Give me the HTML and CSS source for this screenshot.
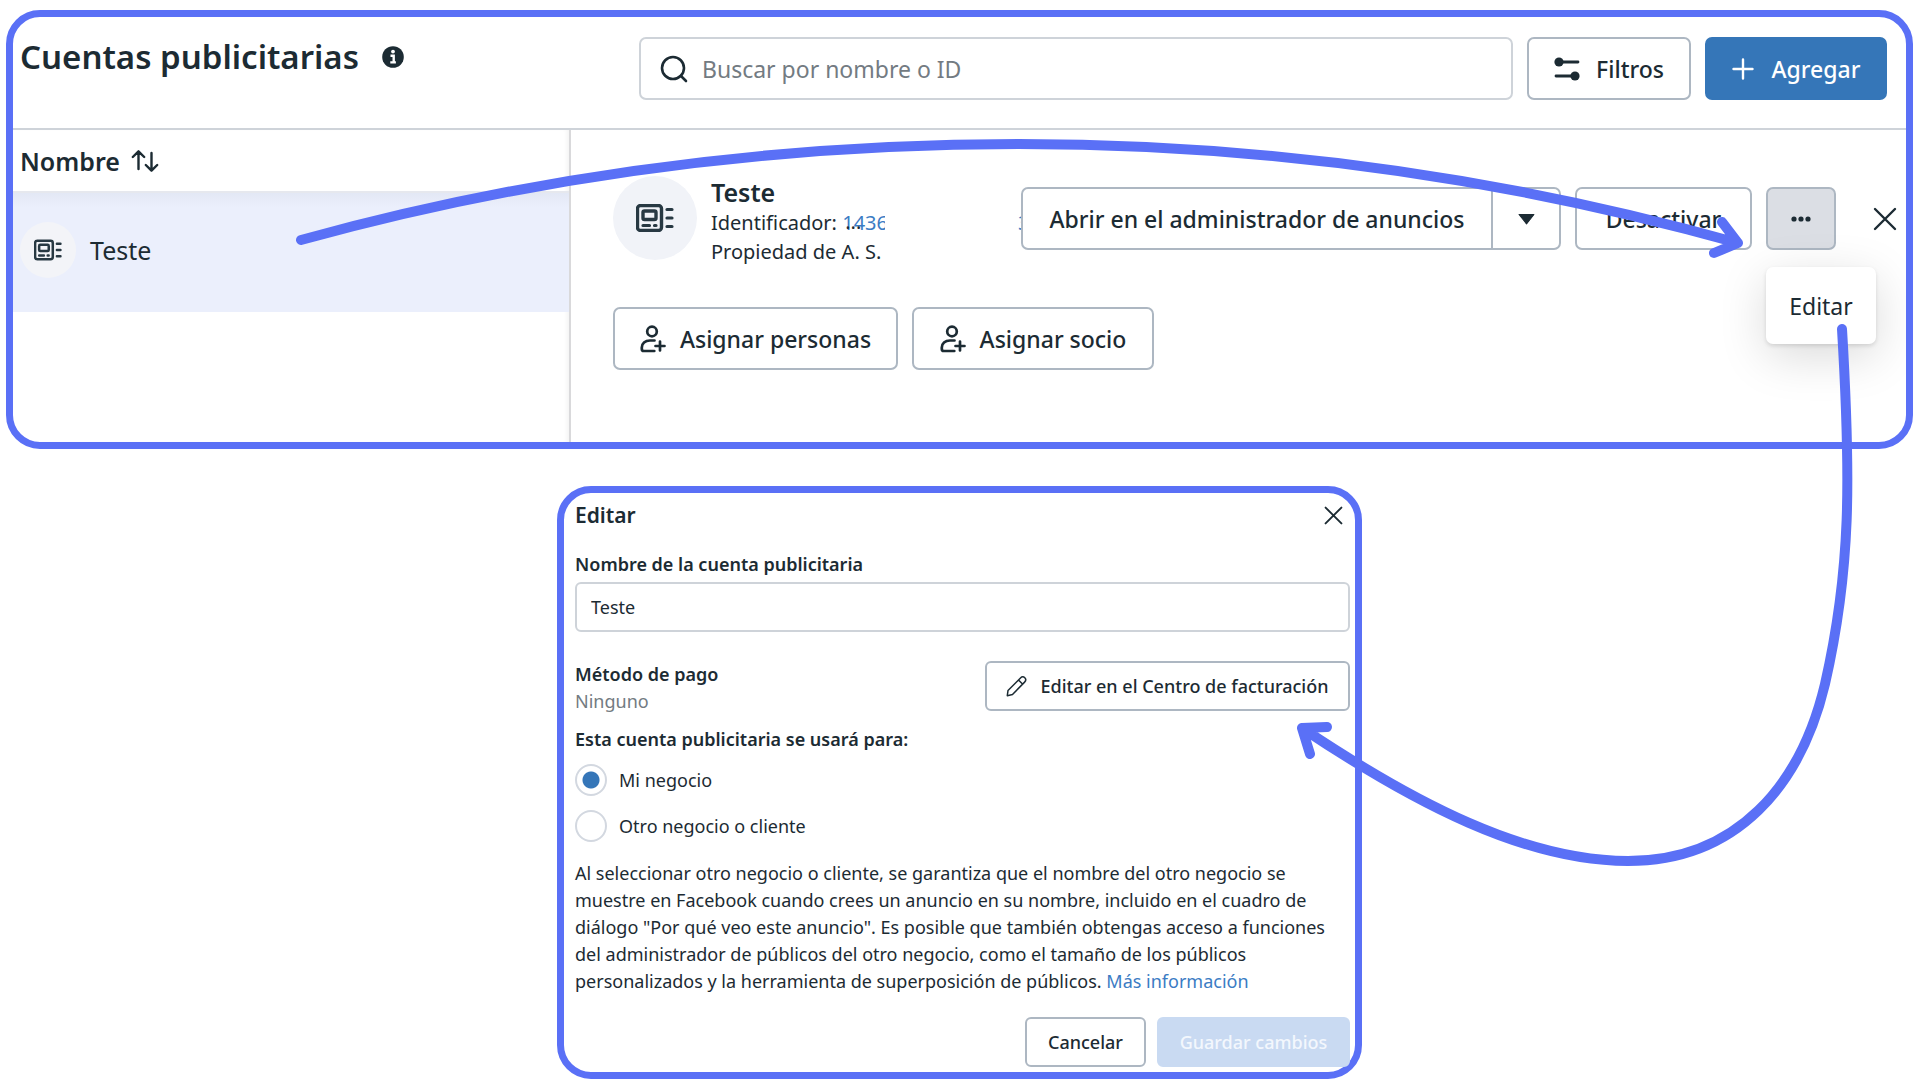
FILE: index.html
```html
<!DOCTYPE html>
<html lang="es">
<head>
<meta charset="utf-8">
<meta name="viewport" content="width=device-width, initial-scale=1">
<title>Cuentas publicitarias</title>
<link rel="stylesheet" href="styles.css">
</head>
<body>
<svg class="sprite" aria-hidden="true">
  <symbol id="icon-account" viewBox="0 0 38 28">
    <rect x="1.5" y="1.5" width="24" height="25" rx="3" fill="none" stroke="currentColor" stroke-width="3.400"/>
    <rect x="7" y="7" width="13" height="8.5" rx="1.5" fill="none" stroke="currentColor" stroke-width="3.400"/>
    <path d="M7 21.500h6.500M18.500 21.500h1.500M31 5.500h5M31 14h5M31 22.500h5" fill="none" stroke="currentColor" stroke-width="3.200" stroke-linecap="round"/>
  </symbol>
  <symbol id="icon-person-add" viewBox="0 0 26 28">
    <g fill="none" stroke="currentColor" stroke-width="2.700" stroke-linecap="round">
      <circle cx="12" cy="6.500" r="4.800"/>
      <path d="M14.500 15.500H10C5 15.500 1.800 18.500 1.800 22.500V24c0 1.200.8 2 2 2h10.500M20 16.500v9M15.500 21h9"/>
    </g>
  </symbol>
  <symbol id="icon-close" viewBox="0 0 24 24">
    <path d="M2 2l20 20M22 2L2 22" fill="none" stroke="currentColor" stroke-width="2.400" stroke-linecap="round"/>
  </symbol>
</svg>

<main class="board">
  <section class="panel accounts">
    <header class="accounts-header">
      <h1 class="title">Cuentas publicitarias
        <svg class="info" viewBox="0 0 22 22" role="img" aria-label="Información"><circle cx="11" cy="11" r="10.800" fill="currentColor"/><circle cx="11" cy="5.600" r="1.900" fill="#fff"/><path d="M8.500 9.800h3.200v6.500M8.300 16.400h5.600" fill="none" stroke="#fff" stroke-width="2.400"/></svg>
      </h1>
      <div class="toolbar">
        <label class="search">
          <svg class="search-icon" viewBox="0 0 28 28" aria-hidden="true"><g fill="none" stroke="currentColor" stroke-width="2.600" stroke-linecap="round"><circle cx="13" cy="13" r="11"/><path d="M21 21l5 5"/></g></svg>
          <input class="search-input" type="search" placeholder="Buscar por nombre o ID" aria-label="Buscar por nombre o ID">
        </label>
        <button class="btn btn-filter" type="button">
          <svg class="filter-icon" viewBox="0 0 26 24" aria-hidden="true"><g fill="currentColor"><circle cx="5" cy="5" r="4.600"/><circle cx="21" cy="19" r="4.600"/></g><path d="M5 5h19M2 19h19" stroke="currentColor" stroke-width="2.800" stroke-linecap="round"/></svg>
          Filtros
        </button>
        <button class="btn btn-primary" type="button">
          <svg class="plus-icon" viewBox="0 0 22 22" aria-hidden="true"><path d="M11 1.500v19M1.500 11h19" stroke="currentColor" stroke-width="2.400" stroke-linecap="round"/></svg>
          Agregar
        </button>
      </div>
    </header>
    <div class="accounts-body">
      <aside class="list">
        <button class="sort" type="button">Nombre
          <svg class="sort-icon" viewBox="0 0 28 24" aria-hidden="true"><path d="M7.500 20V2.500M1.800 8l5.700-5.700L13.200 8M20.500 4v17.500M14.800 16l5.700 5.700 5.700-5.700" fill="none" stroke="currentColor" stroke-width="2.400" stroke-linecap="round" stroke-linejoin="round"/></svg>
        </button>
        <ul class="rows">
          <li class="row">
            <span class="avatar avatar-small"><svg class="account-icon-small"><use href="#icon-account"/></svg></span>
            Teste
          </li>
        </ul>
      </aside>
      <div class="detail">
        <div class="detail-top">
          <span class="avatar"><svg class="account-icon"><use href="#icon-account"/></svg></span>
          <div class="identity">
            <h2 class="name">Teste</h2>
            <p class="meta">
              <span>Identificador: <span class="id-wrap"><a class="id" href="#">1436</a><span class="dots">...</span></span></span>
              <a class="id-end" href="#">3</a>
            </p>
            <p class="meta">Propiedad de A. S.</p>
          </div>
          <div class="actions">
            <div class="split">
              <button class="btn split-main" type="button">Abrir en el administrador de anuncios</button>
              <button class="btn split-caret" type="button" aria-label="Más opciones de apertura"><svg class="caret" viewBox="0 0 16 10" aria-hidden="true"><path d="M1 .8h14L8 9.600z" fill="currentColor" stroke="currentColor" stroke-linejoin="round"/></svg></button>
            </div>
            <button class="btn btn-off" type="button">Desactivar</button>
            <div class="more-wrap">
              <button class="btn btn-more" type="button" aria-label="Más"><svg class="more-icon" viewBox="0 0 20 6" aria-hidden="true"><g fill="currentColor"><circle cx="3" cy="3" r="2.600"/><circle cx="10" cy="3" r="2.600"/><circle cx="17" cy="3" r="2.600"/></g></svg></button>
              <div class="menu"><button class="menu-item" type="button">Editar</button></div>
            </div>
            <button class="close" type="button" aria-label="Cerrar"><svg class="close-icon"><use href="#icon-close"/></svg></button>
          </div>
        </div>
        <div class="assign">
          <button class="btn btn-people" type="button"><svg class="person-icon"><use href="#icon-person-add"/></svg>Asignar personas</button>
          <button class="btn btn-partner" type="button"><svg class="person-icon"><use href="#icon-person-add"/></svg>Asignar socio</button>
        </div>
      </div>
    </div>
  </section>

  <form class="panel dialog">
    <header class="dialog-header">
      <h2 class="dialog-title">Editar</h2>
      <button class="close" type="button" aria-label="Cerrar"><svg class="close-icon-small"><use href="#icon-close"/></svg></button>
    </header>
    <label class="label" for="account-name">Nombre de la cuenta publicitaria</label>
    <input class="field" id="account-name" type="text" value="Teste">
    <div class="payment">
      <div>
        <h3 class="label">Método de pago</h3>
        <p class="muted">Ninguno</p>
      </div>
      <button class="btn btn-small btn-billing" type="button">
        <svg class="pencil" viewBox="0 0 22 22" aria-hidden="true"><path d="M2 15.500L14.500 3c1.500-1.500 3-1.500 4.300-.2s1.300 2.800-.2 4.300L6.500 19.500 1.300 20.700zM12.500 5l4.500 4.500" fill="none" stroke="currentColor" stroke-width="1.500" stroke-linejoin="round"/></svg>
        Editar en el Centro de facturación
      </button>
    </div>
    <fieldset class="usage">
      <legend class="label">Esta cuenta publicitaria se usará para:</legend>
      <label class="choice"><input class="radio" type="radio" name="usage" checked>Mi negocio</label>
      <label class="choice"><input class="radio" type="radio" name="usage">Otro negocio o cliente</label>
    </fieldset>
    <p class="note">Al seleccionar otro negocio o cliente, se garantiza que el nombre del otro negocio se<br>muestre en Facebook cuando crees un anuncio en su nombre, incluido en el cuadro de<br>diálogo "Por qué veo este anuncio". Es posible que también obtengas acceso a funciones<br>del administrador de públicos del otro negocio, como el tamaño de los públicos<br>personalizados y la herramienta de superposición de públicos. <a class="link" href="#">Más información</a></p>
    <footer class="dialog-footer">
      <button class="btn btn-small btn-cancel" type="button">Cancelar</button>
      <button class="btn btn-small btn-save" type="submit" disabled>Guardar cambios</button>
    </footer>
  </form>

  <svg class="arrows" viewBox="0 0 1922 1090" preserveAspectRatio="none" aria-hidden="true">
    <path d="M301 240Q650 144 1019 144Q1385 144 1738 243M1722 222L1738 243L1714 253"/>
    <path d="M1842 329C1851 480 1851 570 1825 684C1801 785 1737 861 1628 861C1525 861 1414 803 1302 728M1327 727L1302 728L1310 754"/>
  </svg>
</main>
</body>
</html>
```
FILE: styles.css
```css
:root {
  --accent: #5a70f6;
  --blue: #3576b8;
  --ink: #1c2b33;
  --line: #ced3d9;
  --btn-line: #adb7c2;
}

* { box-sizing: border-box; }

body {
  margin: 0;
  background: #fff;
  color: var(--ink);
  font-family: "Noto Sans", "Open Sans", sans-serif;
  font-size: 23px;
}

h1, h2, h3, p, ul { margin: 0; padding: 0; }
button, input { font: inherit; color: inherit; }
a { text-decoration: none; }
svg { flex: none; }
.sprite { position: absolute; width: 0; height: 0; }

.board {
  position: relative;
  padding: 10px 9px 11px 6px;
}

.panel { border: 7px solid var(--accent); background: #fff; }

/* Accounts panel */
.accounts { border-radius: 34px; height: 439px; overflow: hidden; display: flex; flex-direction: column; }

.accounts-header {
  display: flex;
  justify-content: space-between;
  align-items: flex-start;
  height: 113px;
  padding: 20px 19px 0 7px;
  border-bottom: 2px solid var(--line);
}

.title { display: flex; align-items: center; gap: 23px; font-size: 33px; font-weight: 600; line-height: 40px; white-space: nowrap; }
.info { width: 22px; height: 22px; }

.toolbar { display: flex; gap: 14px; width: 1248px; }

.search {
  flex: 1;
  display: flex;
  align-items: center;
  gap: 14px;
  height: 63px;
  padding: 0 19px;
  border: 2px solid var(--line);
  border-radius: 7px;
}
.search-icon { width: 28px; height: 28px; }
.search-input { flex: 1; min-width: 0; padding: 0; border: 0; outline: 0; background: none; }
.search-input::placeholder { color: #737b82; opacity: 1; }

.btn {
  display: flex;
  align-items: center;
  justify-content: center;
  height: 63px;
  padding: 0;
  border: 2px solid var(--btn-line);
  border-radius: 7px;
  background: #fff;
  font-weight: 500;
  white-space: nowrap;
}
.btn-filter { width: 164px; gap: 16px; }
.filter-icon { width: 26px; height: 24px; }
.btn-primary { width: 182px; gap: 18px; border-color: var(--blue); background: var(--blue); color: #fff; }
.plus-icon { width: 22px; height: 22px; }

.accounts-body { flex: 1; display: flex; }

.list { width: 558px; border-right: 2px solid #d9d9db; box-shadow: inset -4px 0 4px -2px #0000000d; }
.sort {
  display: flex;
  align-items: center;
  gap: 11px;
  width: 100%;
  height: 63px;
  padding: 0 7px;
  border: 0;
  border-bottom: 2px solid #e6e8ee;
  background: none;
  font-size: 25px;
  font-weight: 600;
}
.sort-icon { width: 28px; height: 24px; }
.rows { list-style: none; }
.row {
  display: flex;
  align-items: center;
  gap: 14px;
  height: 119px;
  padding: 0 7px 6px;
  background: linear-gradient(#e3e8f5, #ebeffc 14px);
  font-size: 25px;
}

.avatar {
  display: flex;
  align-items: center;
  justify-content: center;
  flex: none;
  width: 84px;
  height: 84px;
  border-radius: 50%;
  background: #f1f3f8;
  color: #283943;
}
.avatar-small { width: 56px; height: 56px; background: #f3f4f8; }
.account-icon { width: 38px; height: 28px; }
.account-icon-small { width: 28px; height: 22px; }

.detail { flex: 1; padding: 46px 9px 0 42px; }
.detail-top { display: flex; }
.identity { flex: 1; margin-left: 14px; }
.name { font-size: 25px; font-weight: 600; line-height: 32px; }
.meta { display: flex; justify-content: space-between; font-size: 20px; line-height: 29px; white-space: nowrap; }
.id-wrap { position: relative; }
.id { display: inline-block; width: 43px; overflow: hidden; vertical-align: top; color: #3b7cc4; }
.dots { position: absolute; left: 3px; top: 0; line-height: 26px; }
.id-end { width: 3px; overflow: hidden; color: #3b7cc4; }

.actions { display: flex; align-items: center; height: 63px; margin-top: 11px; }
.split { display: flex; }
.split-main { width: 472px; border-radius: 7px 0 0 7px; }
.split-caret { width: 68px; border-left: 0; border-radius: 0 7px 7px 0; }
.caret { width: 17px; height: 12px; }
.btn-off { width: 177px; margin: 0 14px; }
.more-wrap { position: relative; }
.btn-more { width: 70px; background: #dbdee4; }
.more-icon { width: 20px; height: 6px; }
.menu {
  position: absolute;
  top: 80px;
  left: 0;
  width: 110px;
  border-radius: 7px;
  background: #fff;
  box-shadow: 0 2px 4px #0000001f, 0 12px 48px #00000026;
}
.menu-item { width: 100%; height: 77px; padding: 0; border: 0; background: none; }
.close { display: flex; padding: 0; border: 0; background: none; }
.actions .close { margin-left: 37px; }
.close-icon { width: 24px; height: 24px; }
.close-icon-small { width: 19px; height: 19px; }

.assign { display: flex; gap: 14px; margin-top: 41px; }
.btn-people { width: 285px; gap: 14px; }
.btn-partner { width: 242px; gap: 14px; }
.person-icon { width: 26px; height: 28px; }

/* Edit dialog */
.dialog {
  max-width: 805px;
  margin: 37px auto 0;
  padding: 11px 5px 5px 11px;
  border-radius: 34px;
  font-size: 18px;
}
.dialog-header { display: flex; align-items: center; justify-content: space-between; height: 22px; padding-right: 7px; }
.dialog-title { font-size: 21px; font-weight: 600; line-height: 22px; }
.label { display: block; padding: 0; font-size: 18px; font-weight: 600; line-height: 27px; }
.dialog > .label { margin-top: 25px; }
.field { display: block; width: 100%; height: 50px; margin-top: 4px; padding: 0 14px; border: 2px solid var(--line); border-radius: 6px; }
.payment { display: flex; justify-content: space-between; margin-top: 29px; }
.muted { color: #737b82; line-height: 27px; }
.btn-small { height: 50px; border-radius: 6px; }
.btn-billing { width: 365px; gap: 12px; }
.pencil { width: 22px; height: 22px; }
.usage { margin: 11px 0 0; padding: 0; border: 0; }
.choice { display: flex; align-items: center; gap: 12px; height: 32px; margin-top: 14px; }
.usage .label + .choice { margin-top: 11px; }
.radio {
  appearance: none;
  flex: none;
  width: 32px;
  height: 32px;
  margin: 0;
  border: 2px solid #d3d8e0;
  border-radius: 50%;
}
.radio:checked { background: radial-gradient(circle, var(--blue) 8px, #fff 9px); }
.note { margin-top: 18px; line-height: 27px; white-space: nowrap; }
.link { color: #3b7cc4; }
.dialog-footer { display: flex; justify-content: flex-end; gap: 11px; margin-top: 22px; }
.btn-cancel { width: 121px; }
.btn-save { width: 193px; border-color: #c9daf2; background: #c9daf2; color: #f3f7fd; }

/* Hand-drawn pointers laid over both panels */
.arrows { position: absolute; top: 0; left: 0; width: 100%; height: 1090px; pointer-events: none; }
.arrows path { fill: none; stroke: var(--accent); stroke-width: 10px; stroke-linecap: round; stroke-linejoin: round; }
```
